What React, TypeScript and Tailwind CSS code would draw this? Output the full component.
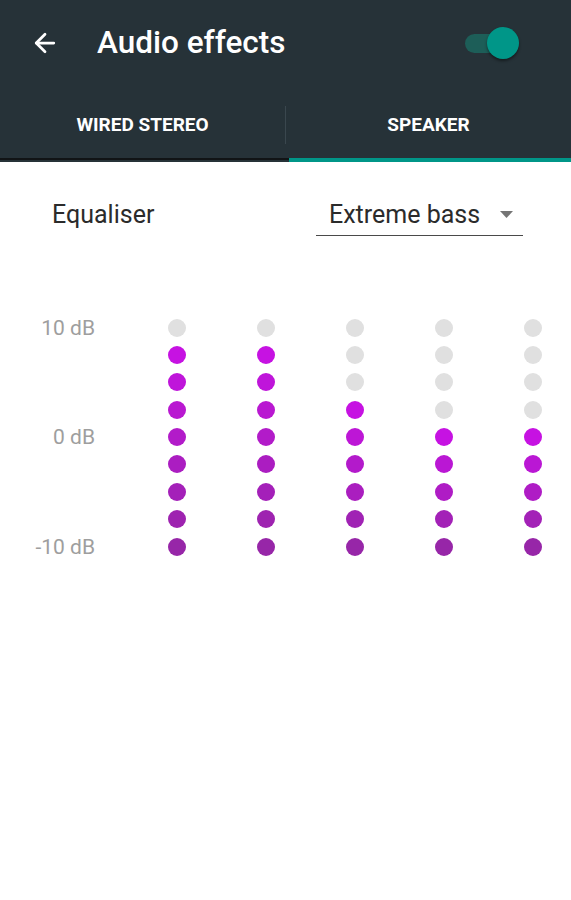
import { ArrowLeft } from "lucide-react";

const columns = [8, 8, 6, 5, 5];
const ROWS = 9;

function mix(t: number) {
  // bright magenta at the top of a bar, deeper purple at the bottom
  const a = [0xc6, 0x12, 0xe2];
  const b = [0x97, 0x26, 0xa8];
  const c = a.map((v, i) => Math.round(v + (b[i] - v) * t));
  return `rgb(${c[0]}, ${c[1]}, ${c[2]})`;
}

function Column({ filled }: { filled: number }) {
  const first = ROWS - filled;
  return (
    <div className="flex flex-col gap-[9.4px]">
      {Array.from({ length: ROWS }).map((_, i) => {
        if (i < first) {
          return <div key={i} className="h-[18px] w-[18px] rounded-full bg-[#e0e0e0]" />;
        }
        const t = filled > 1 ? (i - first) / (filled - 1) : 0;
        return (
          <div
            key={i}
            className="h-[18px] w-[18px] rounded-full"
            style={{ backgroundColor: mix(t) }}
          />
        );
      })}
    </div>
  );
}

export default function App() {
  return (
    <div className="min-h-[900px] w-[571px] bg-white font-['Roboto',sans-serif]">
      <div className="bg-[#263238]">
        <div className="flex h-[86px] items-center">
          <ArrowLeft className="ml-[30px] text-white" size={30} strokeWidth={2.2} />
          <h1 className="ml-[37px] text-[31.5px] font-medium text-white">Audio effects</h1>
          <div className="relative ml-auto mr-[52px] h-[32px] w-[54px]">
            <div className="absolute left-0 top-[7px] h-[19px] w-[50px] rounded-full bg-[#1d5e58]" />
            <div className="absolute right-0 top-0 h-[32px] w-[32px] rounded-full bg-[#009688] shadow-[0_2px_3px_rgba(0,0,0,0.45)]" />
          </div>
        </div>
        <div className="flex h-[72px] items-center pt-[6px]">
          <div className="flex h-full flex-1 items-center justify-center text-[19px] font-bold text-white">
            WIRED STEREO
          </div>
          <div className="h-[38px] w-px bg-[#3a474e]" />
          <div className="flex h-full flex-1 items-center justify-center text-[19px] font-bold text-white">
            SPEAKER
          </div>
        </div>
        <div className="flex">
          <div className="h-[2px] w-[289px] bg-[#111416]" />
          <div className="h-[4px] flex-1 bg-[#009688]" />
        </div>
      </div>

      <div className="flex items-start pt-[34px]">
        <span className="ml-[52px] text-[25px] text-[#2b2b2b]">Equaliser</span>
        <div className="ml-auto mr-[48px] flex w-[207px] items-center border-b-[1.5px] border-[#4a4a4a] pb-[1px] pl-[13px]">
          <span className="text-[25px] text-[#2b2b2b]">Extreme bass</span>
          <svg className="ml-auto mr-[10px]" width="13" height="7" viewBox="0 0 13 7">
            <path d="M0 0h13L6.5 7z" fill="#757575" />
          </svg>
        </div>
      </div>

      <div className="mt-[83px] flex">
        <div className="flex w-[95px] flex-col items-end gap-[9.4px] text-[21px] leading-[18px] text-[#9e9e9e]">
          {Array.from({ length: ROWS }).map((_, i) => (
            <div key={i} className="h-[18px] whitespace-nowrap">
              {i === 0 ? "10 dB" : i === 4 ? "0 dB" : i === 8 ? "-10 dB" : ""}
            </div>
          ))}
        </div>
        <div className="ml-[73px] flex gap-[71px]">
          {columns.map((f, i) => (
            <Column key={i} filled={f} />
          ))}
        </div>
      </div>
    </div>
  );
}
